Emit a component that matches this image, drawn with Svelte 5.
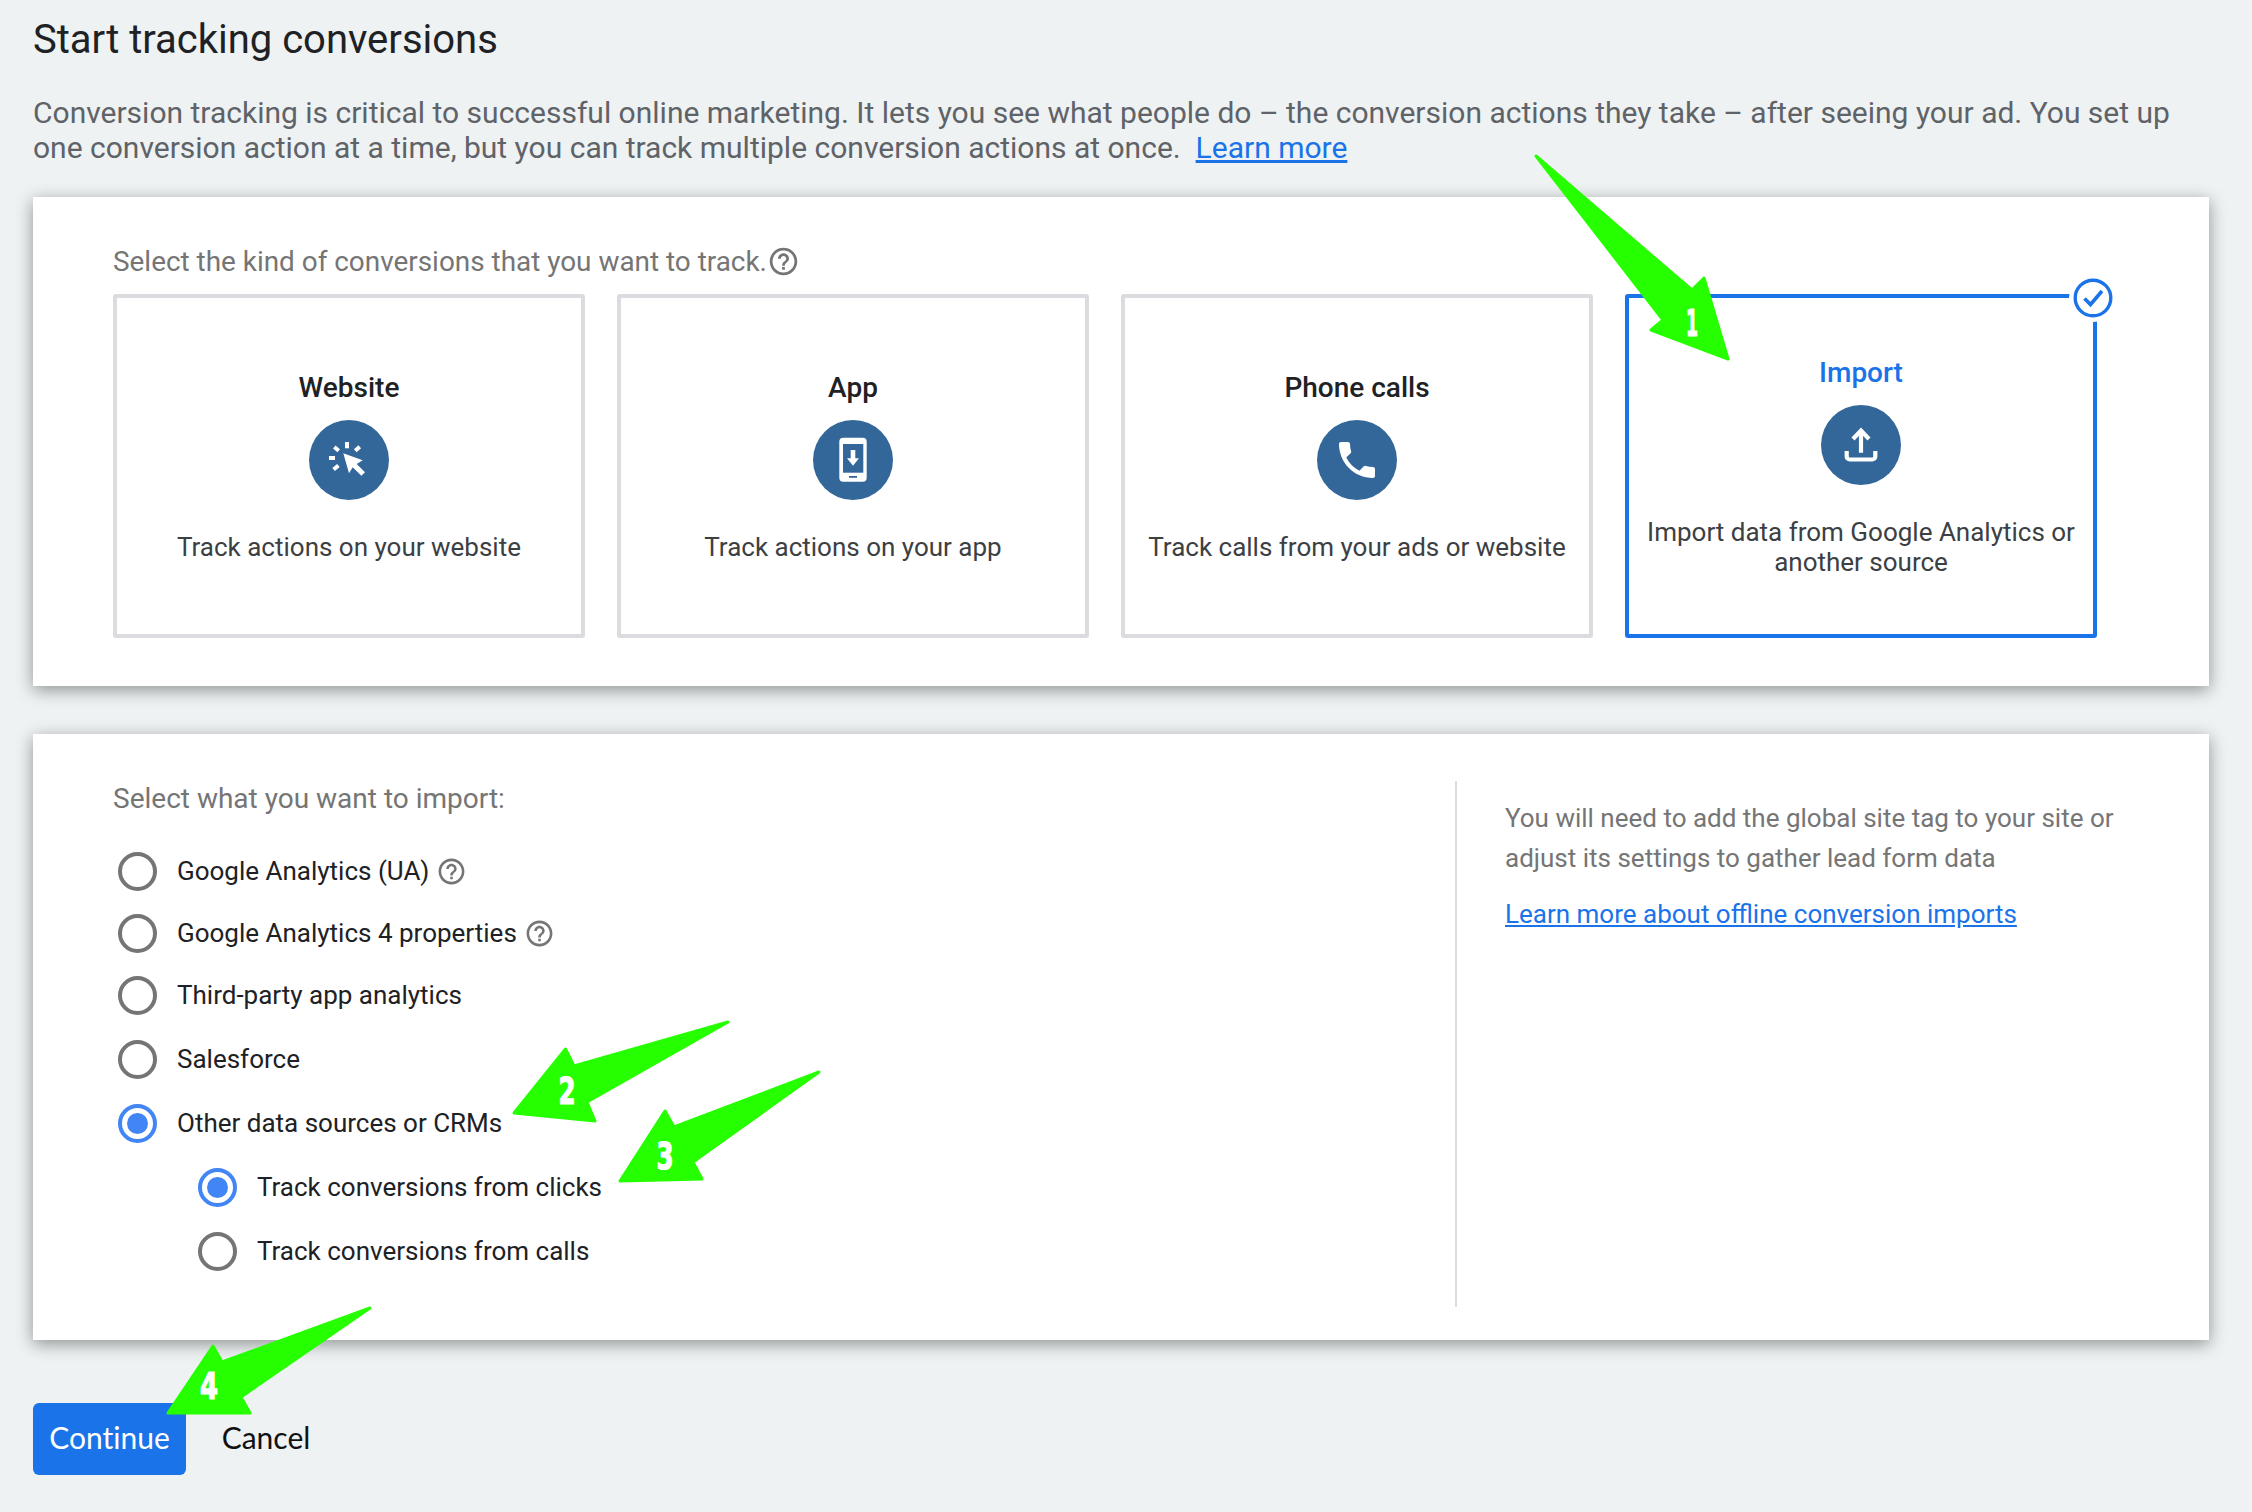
<script>
  const helpPath = "M11 18h2v-2h-2v2zm1-16C6.48 2 2 6.48 2 12s4.48 10 10 10 10-4.48 10-10S17.52 2 12 2zm0 18c-4.41 0-8-3.59-8-8s3.59-8 8-8 8 3.59 8 8-3.59 8-8 8zm0-14c-2.21 0-4 1.79-4 4h2c0-1.1.9-2 2-2s2 .9 2 2c0 2-3 1.75-3 5h2c0-2.25 3-2.5 3-5 0-2.21-1.79-4-4-4z";
  const options = [
    { label: "Google Analytics (UA)", help: true, cls: "r1" },
    { label: "Google Analytics 4 properties", help: true, cls: "r1" },
    { label: "Third-party app analytics", cls: "r2" },
    { label: "Salesforce", cls: "r2" },
    { label: "Other data sources or CRMs", on: true, cls: "r2" },
    { label: "Track conversions from clicks", on: true, sub: true, cls: "r2" },
    { label: "Track conversions from calls", sub: true, cls: "r2" }
  ];
</script>

<div class="page">
  <h1>Start tracking conversions</h1>
  <p class="intro">Conversion tracking is critical to successful online marketing. It lets you see what people do – the conversion actions they take – after seeing your ad. You set up one conversion action at a time, but you can track multiple conversion actions at once. &nbsp;<a href="#top">Learn more</a></p>

  <section class="card kinds">
    <div class="kinds-label">
      <span>Select the kind of conversions that you want to track.</span>
      <svg class="help" viewBox="0 0 24 24"><path d={helpPath} /></svg>
    </div>
    <div class="tiles">
      <div class="tile">
        <h2>Website</h2>
        <svg class="disc" viewBox="0 0 80 80">
          <circle class="disc-bg" cx="40" cy="40" r="40" />
          <path class="w" d="M34.3 33.3 53.7 40.3 47.7 44 56 52.3 52.3 55.7 43.7 47.3 40 53.3Z" />
          <rect class="w" x="36" y="22" width="4" height="6.3" />
          <rect class="w" x="20" y="36" width="6" height="4" />
          <path class="tick" d="M25.3 27 29.7 30.7M50.7 26.7 46.3 30.7M24.6 49.5 29.4 45.5" />
        </svg>
        <p>Track actions on your website</p>
      </div>
      <div class="tile">
        <h2>App</h2>
        <svg class="disc" viewBox="0 0 80 80">
          <circle class="disc-bg" cx="40" cy="40" r="40" />
          <rect class="w" x="26.3" y="17.7" width="27.4" height="44" rx="4" />
          <rect class="b" x="30" y="24" width="20.3" height="28.7" />
          <rect class="w" x="37.7" y="30" width="4.6" height="9" />
          <path class="w" d="M34 38.3H46L40 45.7Z" />
          <rect class="b" x="36" y="56" width="8" height="1.8" />
        </svg>
        <p>Track actions on your app</p>
      </div>
      <div class="tile">
        <h2>Phone calls</h2>
        <svg class="disc" viewBox="0 0 80 80">
          <circle class="disc-bg" cx="40" cy="40" r="40" />
          <g transform="translate(16 16) scale(2)">
            <path class="w" d="M6.62 10.79c1.44 2.83 3.76 5.14 6.59 6.59l2.2-2.2c.27-.27.67-.36 1.02-.24 1.12.37 2.33.57 3.57.57.55 0 1 .45 1 1V20c0 .55-.45 1-1 1-9.39 0-17-7.61-17-17 0-.55.45-1 1-1h3.5c.55 0 1 .45 1 1 0 1.25.2 2.45.57 3.57.11.35.03.74-.25 1.02l-2.2 2.2z" />
          </g>
        </svg>
        <p>Track calls from your ads or website</p>
      </div>
      <div class="tile selected">
        <h2>Import</h2>
        <svg class="disc" viewBox="0 0 80 80">
          <circle class="disc-bg" cx="40" cy="40" r="40" />
          <path class="up" d="M40 26V47.7M32 34 40 25.5 48 34" />
          <path class="up" d="M25.7 46V51.5A3 3 0 0 0 28.7 54.5H51.3A3 3 0 0 0 54.3 51.5V46" />
        </svg>
        <p>Import data from Google Analytics or another source</p>
        <svg class="badge" viewBox="0 0 48 48">
          <circle class="badge-bg" cx="24" cy="24" r="24" />
          <circle class="badge-ring" cx="24" cy="24" r="17.8" />
          <path class="badge-check" d="M15.5 24.5 21.5 30.5 33 17" />
        </svg>
      </div>
    </div>
  </section>

  <section class="card imports">
    <div class="import-left">
      <div class="import-label">Select what you want to import:</div>
      {#each options as o}
        <div class="opt {o.cls}" class:sub={o.sub}>
          <span class="radio" class:on={o.on}></span>
          <span class="opt-text">{o.label}</span>
          {#if o.help}
            <svg class="help small" viewBox="0 0 24 24"><path d={helpPath} /></svg>
          {/if}
        </div>
      {/each}
    </div>
    <div class="import-right">
      <p>You will need to add the global site tag to your site or adjust its settings to gather lead form data</p>
      <a href="#top">Learn more about offline conversion imports</a>
    </div>
  </section>

  <div class="actions">
    <button class="primary">Continue</button>
    <button class="ghost">Cancel</button>
  </div>

  <svg class="arrows" viewBox="0 0 2252 1512">
    <polygon points="1536,156 1692,290 1704,278 1728,359 1651,330 1663,320" />
    <polygon points="728,1022 574,1066 565.500,1049 514,1113 595,1121 587,1102" />
    <polygon points="819,1072 674,1127 665,1111 620,1181 702,1179 693,1162" />
    <polygon points="370,1308 222,1362 213,1346 168,1413 250,1413 241,1397" />
    <text x="1692" y="336" textLength="12" lengthAdjust="spacingAndGlyphs">1</text>
    <text x="567" y="1104" textLength="17" lengthAdjust="spacingAndGlyphs">2</text>
    <text x="665" y="1169" textLength="17" lengthAdjust="spacingAndGlyphs">3</text>
    <text x="209" y="1399" textLength="18" lengthAdjust="spacingAndGlyphs">4</text>
  </svg>
</div>

<style>
  :global(body) {
    margin: 0;
    background: #eef2f3;
  }
  .page {
    position: relative;
    box-sizing: border-box;
    width: 2252px;
    height: 1512px;
    padding: 0 43px 0 33px;
    background: #eef2f3;
    font-family: Roboto, "Liberation Sans", sans-serif;
    overflow: hidden;
  }
  h1 {
    margin: 0;
    padding-top: 17px;
    font-size: 40px;
    line-height: 45px;
    font-weight: 400;
    color: #202124;
  }
  .intro {
    margin: 33px 0 0;
    font-size: 30px;
    line-height: 35px;
    color: #5f6368;
    width: 2170px;
  }
  .intro a {
    color: #1a73e8;
  }
  .card {
    background: #fff;
    box-shadow: 0 4px 16px rgba(0, 0, 0, 0.4);
  }
  .kinds {
    margin-top: 32px;
    height: 489px;
    box-sizing: border-box;
    padding: 47px 80px 0;
  }
  .kinds-label {
    display: flex;
    align-items: center;
    height: 34px;
    font-size: 27.900px;
    color: #757575;
  }
  .help {
    width: 33px;
    height: 33px;
    fill: #757575;
  }
  .tiles {
    display: flex;
    gap: 32px;
    margin-top: 16px;
  }
  .tile {
    position: relative;
    box-sizing: border-box;
    width: 472px;
    height: 344px;
    border: 4px solid #dadce0;
    border-radius: 3px;
    display: flex;
    flex-direction: column;
    align-items: center;
    padding-top: 73px;
  }
  .tile h2 {
    margin: 0;
    font-size: 28px;
    line-height: 34px;
    font-weight: 500;
    color: #202124;
  }
  .disc {
    width: 80px;
    height: 80px;
    margin-top: 15px;
  }
  .disc-bg {
    fill: #33679a;
  }
  .w {
    fill: #fff;
  }
  .b {
    fill: #33679a;
  }
  .tick {
    stroke: #fff;
    stroke-width: 4;
    fill: none;
  }
  .up {
    stroke: #fff;
    stroke-width: 4.200;
    fill: none;
  }
  .tile p {
    margin: 32px 0 0;
    padding: 0 16px;
    font-size: 26px;
    line-height: 30px;
    text-align: center;
    color: #3c4043;
  }
  .tile.selected {
    border-color: #1a73e8;
    padding-top: 58px;
  }
  .tile.selected h2 {
    color: #1a73e8;
  }
  .badge {
    position: absolute;
    top: -24px;
    right: -24px;
    width: 48px;
    height: 48px;
  }
  .badge-bg {
    fill: #fff;
  }
  .badge-ring {
    fill: #fff;
    stroke: #1a73e8;
    stroke-width: 3.400;
  }
  .badge-check {
    fill: none;
    stroke: #1a73e8;
    stroke-width: 3.600;
  }
  .imports {
    margin-top: 48px;
    height: 606px;
    box-sizing: border-box;
    padding: 47px 0 0 80px;
    display: flex;
  }
  .import-left {
    width: 1342px;
    height: 526px;
    flex: none;
  }
  .import-label {
    height: 36px;
    line-height: 36px;
    font-size: 28px;
    color: #757575;
    margin-bottom: 34px;
  }
  .opt {
    display: flex;
    align-items: center;
    height: 40px;
    padding-left: 5px;
    font-size: 26px;
    color: #202124;
  }
  .r1 {
    margin-bottom: 22px;
  }
  .r2 {
    margin-bottom: 24px;
  }
  .opt.sub {
    padding-left: 85px;
  }
  .radio {
    box-sizing: border-box;
    width: 39px;
    height: 39px;
    border: 4px solid #757575;
    border-radius: 50%;
    margin-right: 20px;
    flex: none;
    display: flex;
    align-items: center;
    justify-content: center;
  }
  .radio.on {
    border-color: #4285f4;
  }
  .radio.on::after {
    content: "";
    width: 21px;
    height: 21px;
    border-radius: 50%;
    background: #4285f4;
  }
  .help.small {
    width: 31px;
    height: 31px;
    margin-left: 7px;
  }
  .import-right {
    border-left: 2px solid #dadce0;
    height: 526px;
    box-sizing: border-box;
    padding: 17px 90px 0 48px;
    width: 754px;
    font-size: 26px;
    color: #757575;
  }
  .import-right p {
    margin: 0 0 16px;
    line-height: 40px;
  }
  .import-right a {
    color: #1a73e8;
    line-height: 40px;
  }
  .actions {
    display: flex;
    align-items: center;
    margin-top: 63px;
  }
  button {
    border: 0;
    font-family: Lato, sans-serif;
    font-size: 30px;
    font-variant-ligatures: none;
    height: 72px;
    padding: 0 0 4px;
  }
  .primary {
    width: 153px;
    background: #1a73e8;
    color: #fff;
    border-radius: 6px;
  }
  .ghost {
    width: 92px;
    margin-left: 34px;
    background: transparent;
    color: #111;
  }
  .arrows {
    position: absolute;
    left: 0;
    top: 0;
    width: 2252px;
    height: 1512px;
    pointer-events: none;
  }
  .arrows polygon {
    fill: #26ff00;
    stroke: #26ff00;
    stroke-width: 3;
    stroke-linejoin: round;
  }
  .arrows text {
    fill: #fff;
    stroke: #fff;
    stroke-width: 1.200;
    font-family: "DejaVu Sans Condensed", "DejaVu Sans", sans-serif;
    font-weight: 700;
    font-size: 38px;
    text-anchor: middle;
  }
</style>
